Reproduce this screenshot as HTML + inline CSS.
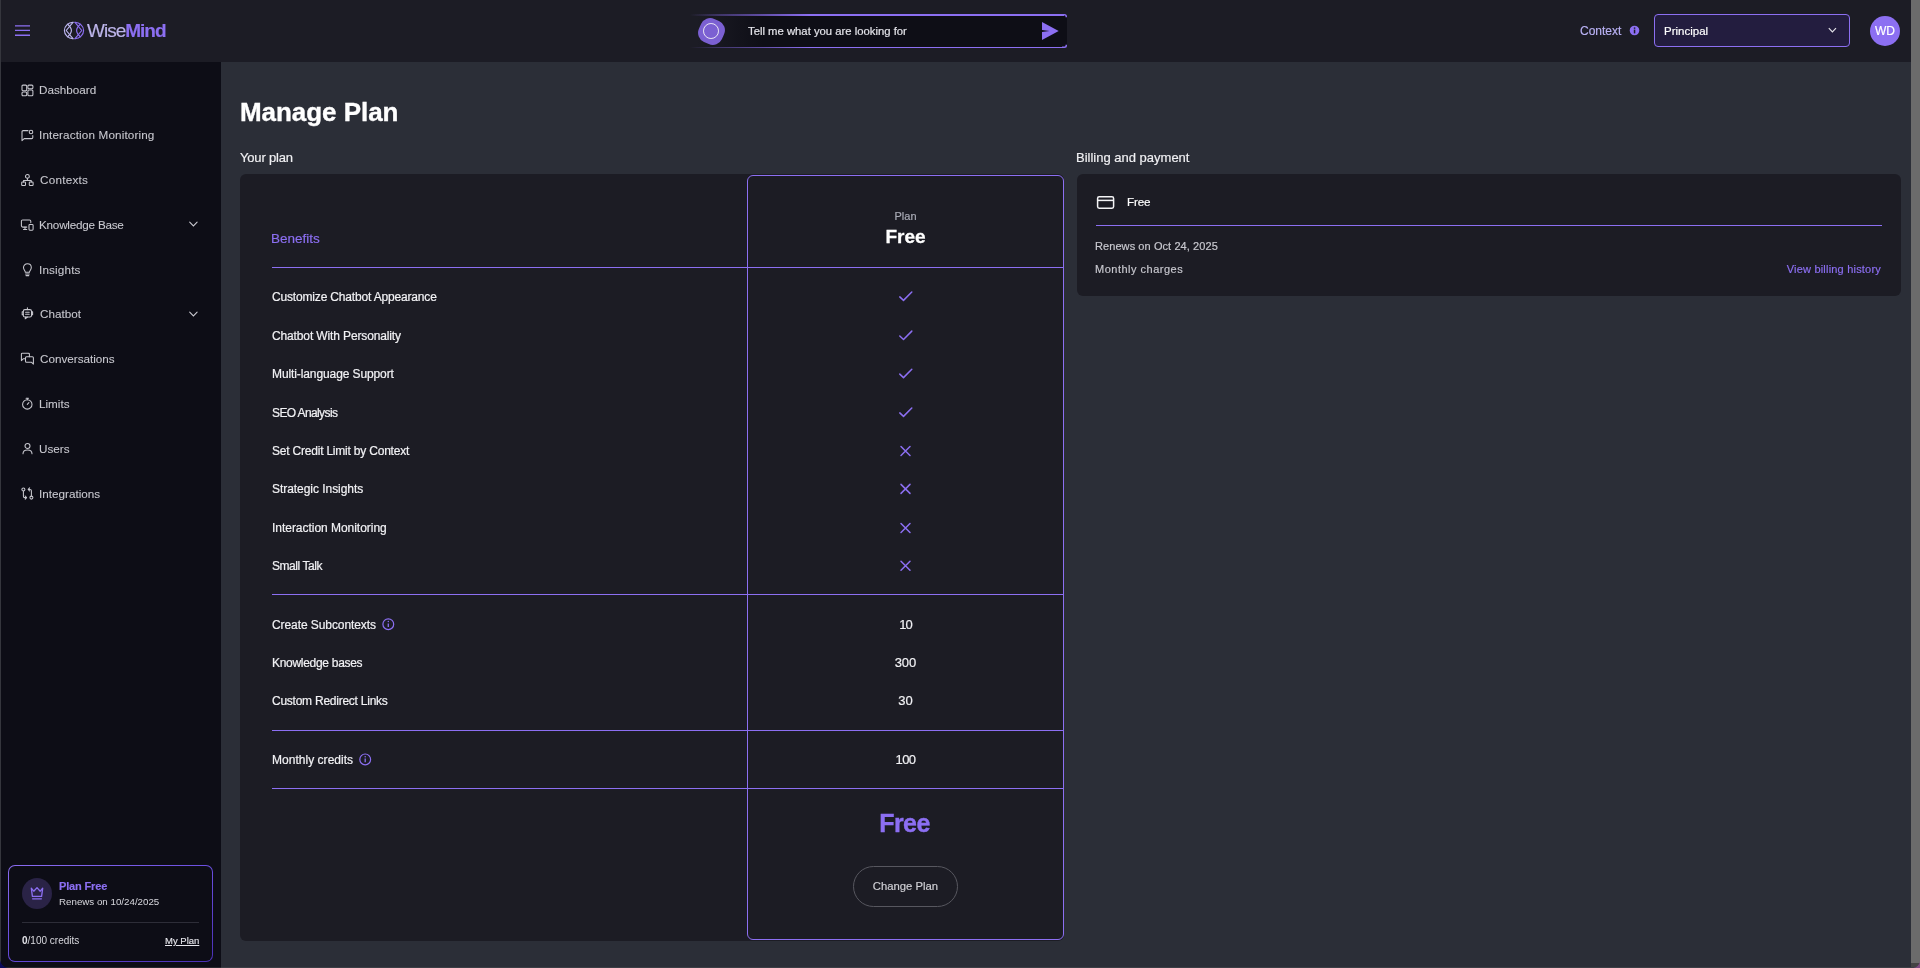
<!DOCTYPE html>
<html><head><meta charset="utf-8"><title>Manage Plan</title>
<style>
*{margin:0;padding:0;box-sizing:border-box}
html,body{width:1920px;height:968px;overflow:hidden;background:#2b2e37;font-family:"Liberation Sans",sans-serif;color:#fff}
.a{position:absolute;display:block}
.t{position:absolute;white-space:nowrap;line-height:1;will-change:transform;-webkit-text-stroke:0.18px currentColor}
</style></head><body>

<div class="a" style="left:0px;top:0px;width:1911px;height:62px;background:#1c1c25"></div>
<div class="a" style="left:0px;top:62px;width:221px;height:906px;background:#0d0d16"></div>
<div class="a" style="left:1911px;top:0px;width:9px;height:968px;background:#6b6b6b"></div>
<div class="a" style="left:0px;top:0px;width:1px;height:968px;background:#35363d"></div>
<div class="a" style="left:0px;top:967px;width:1920px;height:1px;background:#3c3e45"></div>
<div class="a" style="left:0px;top:967px;width:221px;height:1px;background:#26272d"></div>
<div class="a" style="left:1911px;top:963px;width:9px;height:4px;background:#434343"></div>
<svg class="a" style="left:0px;top:958px;" width="10" height="10" viewBox="0 0 10 10" fill="none"><path d="M0 2.5Q1.5 8.5 7.5 10H0Z" fill="#0a0a5a"/></svg>
<svg class="a" style="left:1912px;top:960px;" width="8" height="8" viewBox="0 0 8 8" fill="none"><path d="M8 1.5Q6.8 6.8 1.5 8H8Z" fill="#7d4a80"/></svg>
<svg class="a" style="left:14px;top:24px;" width="17" height="14" viewBox="0 0 17 14" fill="none"><path d="M1 1.9H16M1 6.4H16M1 11.3H16" stroke="#8c6ff2" stroke-width="1.4"/></svg>
<svg class="a" style="left:60px;top:18px;" width="30" height="24" viewBox="0 0 30 24" fill="none"><g stroke="#bdb6f0" stroke-width="1.15" stroke-linejoin="round" stroke-linecap="round"><path d="M13 4.3C8.2 4.6 4.4 8.2 4.4 12.5C4.4 16.8 8.2 20.4 13 20.7"/><path d="M13 4.3L6.2 12.5L13 20.7"/><path d="M7.6 6.2C10.2 8.5 11.4 10.4 11.4 12.5C11.4 14.6 10.2 16.5 7.6 18.8"/></g><g stroke="#8c6ff2" stroke-width="1.15" stroke-linejoin="round" stroke-linecap="round"><path d="M15 4.3C19.8 4.6 23.6 8.2 23.6 12.5C23.6 16.8 19.8 20.4 15 20.7"/><path d="M15 4.3L21.8 12.5L15 20.7"/><path d="M20.4 6.2C17.8 8.5 16.6 10.4 16.6 12.5C16.6 14.6 17.8 16.5 20.4 18.8"/></g></svg>
<div class="t" style="left:87.4px;top:21px;font-size:19px;letter-spacing:-1px;color:#bdb5ea">Wise<span style="color:#8c6ff2;font-weight:bold">Mind</span></div>
<div class="a" style="left:697px;top:14px;width:370px;height:34px;background:linear-gradient(90deg,rgba(14,14,22,0) 0%,#0e0e16 18%,#0e0e16 100%);border-radius:0 3px 3px 0"></div>
<div class="a" style="left:690px;top:14px;width:374px;height:1.5px;background:linear-gradient(90deg,rgba(140,111,242,0) 0%,rgba(140,111,242,0.35) 8%,#8c6ff2 32%)"></div>
<div class="a" style="left:690px;top:46.5px;width:374px;height:1.5px;background:linear-gradient(90deg,rgba(140,111,242,0) 0%,rgba(140,111,242,0.35) 8%,#8c6ff2 32%)"></div>
<svg class="a" style="left:1062px;top:14px;" width="6" height="34" viewBox="0 0 6 34" fill="none"><path d="M0 0.75H2.5Q4.25 0.75 4.25 2.5V3.2M4.25 30.8V31.5Q4.25 33.25 2.5 33.25H0" stroke="#8c6ff2" stroke-width="1.5"/></svg>
<svg class="a" style="left:696px;top:16px;" width="31" height="31" viewBox="0 0 31 31" fill="none"><rect x="2.9" y="2.9" width="25.2" height="25.2" rx="10" transform="rotate(24 15.5 15.5)" fill="#7b60d2"/></svg>
<div class="a" style="left:703.2px;top:23px;width:15.8px;height:15.8px;border:1.7px solid #ebe7f5;border-radius:50%"></div>
<div class="t" style="left:747.5px;top:26px;font-size:11.3px;color:#e4e4ea;">Tell me what you are looking for</div>
<svg class="a" style="left:1040px;top:20px;" width="22" height="22" viewBox="0 0 22 22" fill="none"><path d="M2 2L18.7 11L2 20L2 12L9.5 11L2 10Z" fill="#8c6ff2"/></svg>
<div class="t" style="left:1579.5px;top:25px;font-size:12px;color:#b9b1f4;">Context</div>
<svg class="a" style="left:1629px;top:25px;" width="11" height="11" viewBox="0 0 11 11" fill="none"><circle cx="5.5" cy="5.5" r="4.8" fill="#8c6ff2"/><rect x="4.8" y="4.6" width="1.5" height="3.8" fill="#1c1c25"/><rect x="4.8" y="2.4" width="1.5" height="1.4" fill="#1c1c25"/></svg>
<div class="a" style="left:1654px;top:14px;width:196px;height:33px;border:1.5px solid #8c6ff2;border-radius:4px;background:#231d3f"></div>
<div class="t" style="left:1663.6px;top:26px;font-size:11.5px;color:#fff;">Principal</div>
<svg class="a" style="left:1826px;top:26px;" width="12" height="8" viewBox="0 0 12 8" fill="none"><path d="M2.8 2.2L6.4 5.8L10 2.2" stroke="#e2e2e8" stroke-width="1.2"/></svg>
<div class="a" style="left:1870px;top:16px;width:30px;height:30px;background:#8c6ff2;border-radius:50%"></div>
<div class="t" style="left:1870px;top:25px;font-size:12px;color:#fff;width:30px;text-align:center;">WD</div>
<div class="t" style="left:39.2px;top:84px;font-size:11.7px;color:#c8c8cf;letter-spacing:0px;-webkit-text-stroke:0.08px #c8c8cf;">Dashboard</div>
<div class="t" style="left:39.2px;top:129px;font-size:11.7px;color:#c8c8cf;letter-spacing:0.14px;-webkit-text-stroke:0.08px #c8c8cf;">Interaction Monitoring</div>
<div class="t" style="left:40px;top:174px;font-size:11.7px;color:#c8c8cf;letter-spacing:0.24px;-webkit-text-stroke:0.08px #c8c8cf;">Contexts</div>
<div class="t" style="left:39.2px;top:219px;font-size:11.7px;color:#c8c8cf;letter-spacing:-0.22px;-webkit-text-stroke:0.08px #c8c8cf;">Knowledge Base</div>
<div class="t" style="left:39.2px;top:264px;font-size:11.7px;color:#c8c8cf;letter-spacing:0.16px;-webkit-text-stroke:0.08px #c8c8cf;">Insights</div>
<div class="t" style="left:40px;top:308px;font-size:11.7px;color:#c8c8cf;letter-spacing:0px;-webkit-text-stroke:0.08px #c8c8cf;">Chatbot</div>
<div class="t" style="left:40px;top:353px;font-size:11.7px;color:#c8c8cf;letter-spacing:0px;-webkit-text-stroke:0.08px #c8c8cf;">Conversations</div>
<div class="t" style="left:39.2px;top:398px;font-size:11.7px;color:#c8c8cf;letter-spacing:0px;-webkit-text-stroke:0.08px #c8c8cf;">Limits</div>
<div class="t" style="left:39.2px;top:443px;font-size:11.7px;color:#c8c8cf;letter-spacing:0px;-webkit-text-stroke:0.08px #c8c8cf;">Users</div>
<div class="t" style="left:39.2px;top:488px;font-size:11.7px;color:#c8c8cf;letter-spacing:0px;-webkit-text-stroke:0.08px #c8c8cf;">Integrations</div>
<svg class="a" style="left:20px;top:83px;" width="15" height="15" viewBox="0 0 15 15" fill="none"><g stroke="#c8c8cf" stroke-width="1.05" stroke-linecap="round" stroke-linejoin="round"><rect x="2" y="2.1" width="4.7" height="5.6" rx="1"/><rect x="2" y="8.9" width="4.7" height="3.9" rx="1"/><rect x="7.9" y="2.1" width="5" height="3.6" rx="1"/><rect x="7.9" y="7" width="5" height="5.8" rx="1"/></g></svg>
<svg class="a" style="left:20px;top:128px;" width="15" height="15" viewBox="0 0 15 15" fill="none"><g stroke="#c8c8cf" stroke-width="1.05" stroke-linecap="round" stroke-linejoin="round"><path d="M8 2.6H3.2C2.5 2.6 2 3.1 2 3.8V12.6L4.2 10.6H11.6C12.3 10.6 12.8 10.1 12.8 9.4V7.4"/><circle cx="11" cy="4" r="1.8"/></g></svg>
<svg class="a" style="left:20px;top:172px;" width="15" height="15" viewBox="0 0 15 15" fill="none"><g stroke="#c8c8cf" stroke-width="1.05" stroke-linecap="round" stroke-linejoin="round"><circle cx="7.4" cy="4.4" r="1.9"/><path d="M7.4 6.3V8.5M3.5 10V8.5H11.3V10"/><rect x="1.7" y="10" width="3.8" height="3.5" rx="0.7"/><rect x="9.3" y="10" width="3.8" height="3.5" rx="0.7"/></g></svg>
<svg class="a" style="left:20px;top:217px;" width="15" height="15" viewBox="0 0 15 15" fill="none"><g stroke="#c8c8cf" stroke-width="1.05" stroke-linecap="round" stroke-linejoin="round"><path d="M10.8 5.6V4.2C10.8 3.4 10.3 2.9 9.5 2.9H2.7C1.9 2.9 1.4 3.4 1.4 4.2V8.8C1.4 9.6 1.9 10.1 2.7 10.1H6.8"/><path d="M3.5 12.4H6.8M5 10.1V12.4"/><rect x="9" y="7.4" width="4.1" height="5.8" rx="0.9"/></g></svg>
<svg class="a" style="left:20px;top:262px;" width="15" height="15" viewBox="0 0 15 15" fill="none"><g stroke="#c8c8cf" stroke-width="1.05" stroke-linecap="round" stroke-linejoin="round"><path d="M5.3 10.2C5.3 8.8 3.5 8 3.5 5.6C3.5 3.4 5.2 1.8 7.4 1.8C9.6 1.8 11.3 3.4 11.3 5.6C11.3 8 9.5 8.8 9.5 10.2Z"/><path d="M5.6 12H9.2M6 13.6H8.8"/></g></svg>
<svg class="a" style="left:20px;top:306px;" width="15" height="15" viewBox="0 0 15 15" fill="none"><g stroke="#c8c8cf" stroke-width="1.05" stroke-linecap="round" stroke-linejoin="round"><rect x="3.3" y="3.6" width="8.2" height="7.4" rx="1.6"/><path d="M3.3 5.8H2.2V8.8H3.3M11.5 5.8H12.6V8.8H11.5M7.4 3.6V1.8M5.6 11L5.2 12.8L7.4 11M5.6 6.3H9.2M5.6 8.3H9.2"/></g></svg>
<svg class="a" style="left:20px;top:351px;" width="15" height="15" viewBox="0 0 15 15" fill="none"><g stroke="#c8c8cf" stroke-width="1.05" stroke-linecap="round" stroke-linejoin="round"><path d="M9.4 5.8V3.2C9.4 2.6 9 2.2 8.4 2.2H2.4C1.8 2.2 1.4 2.6 1.4 3.2V9.6L3.2 7.8H5.5"/><path d="M5.5 6.8C5.5 6.2 5.9 5.8 6.5 5.8H12.4C13 5.8 13.4 6.2 13.4 6.8V13.1L11.6 11.3H6.5C5.9 11.3 5.5 10.9 5.5 10.3Z"/></g></svg>
<svg class="a" style="left:20px;top:396px;" width="15" height="15" viewBox="0 0 15 15" fill="none"><g stroke="#c8c8cf" stroke-width="1.05" stroke-linecap="round" stroke-linejoin="round"><circle cx="7.3" cy="8.4" r="4.7"/><path d="M7.3 8.4L8.9 6.6M6.1 2.3H8.5M7.3 2.3V3.7"/></g></svg>
<svg class="a" style="left:20px;top:441px;" width="15" height="15" viewBox="0 0 15 15" fill="none"><g stroke="#c8c8cf" stroke-width="1.05" stroke-linecap="round" stroke-linejoin="round"><circle cx="7.5" cy="4.9" r="2.5"/><path d="M3 12.8C3 10.5 5 8.9 7.5 8.9C10 8.9 12 10.5 12 12.8"/></g></svg>
<svg class="a" style="left:20px;top:486px;" width="15" height="15" viewBox="0 0 15 15" fill="none"><g stroke="#c8c8cf" stroke-width="1.05" stroke-linecap="round" stroke-linejoin="round"><circle cx="3.4" cy="3.4" r="1.5"/><circle cx="11.4" cy="11.6" r="1.5"/><path d="M3.4 4.9V10.2C3.4 11 4 11.6 4.8 11.6H6.5M5.2 10L6.6 11.6L5.2 13.2"/><path d="M11.4 10.1V4.8C11.4 4 10.8 3.4 10 3.4H8.3M9.6 1.8L8.2 3.4L9.6 5"/></g></svg>
<svg class="a" style="left:187px;top:220px;" width="12" height="8" viewBox="0 0 12 8" fill="none"><path d="M2.7 2.2L6.4 5.9L10.1 2.2" stroke="#c8c8cf" stroke-width="1.1" stroke-linecap="round"/></svg>
<svg class="a" style="left:187px;top:310px;" width="12" height="8" viewBox="0 0 12 8" fill="none"><path d="M2.7 2.2L6.4 5.9L10.1 2.2" stroke="#c8c8cf" stroke-width="1.1" stroke-linecap="round"/></svg>
<div class="a" style="left:8px;top:865px;width:205px;height:97px;background:linear-gradient(160deg,#8a6cf0 0%,#6a4ee0 45%,#4a30b4 100%);border-radius:7px"></div>
<div class="a" style="left:9.3px;top:866.3px;width:202.4px;height:94.4px;background:#0d0d16;border-radius:6px"></div>
<div class="a" style="left:22px;top:878px;width:30px;height:31px;background:#2a2346;border-radius:50%"></div>
<svg class="a" style="left:28px;top:884px;" width="18" height="18" viewBox="0 0 18 18" fill="none"><g stroke="#8c6ff2" stroke-width="1.3" stroke-linejoin="round" stroke-linecap="round"><path d="M3.3 4.2L5.8 7.2L9 3.6L12.2 7.2L14.7 4.2L13.6 12.3H4.4Z"/><path d="M4.6 14.8H13.4"/></g></svg>
<div class="t" style="left:58.6px;top:881px;font-size:11px;color:#8c6ff2;font-weight:bold;letter-spacing:-0.15px;">Plan Free</div>
<div class="t" style="left:58.8px;top:897px;font-size:9.75px;color:#d8d8de;-webkit-text-stroke:0px;">Renews on 10/24/2025</div>
<div class="a" style="left:22px;top:922px;width:177px;height:1px;background:#2d2d38"></div>
<div class="t" style="left:22px;top:936px;font-size:10px;color:#d8d8de;-webkit-text-stroke:0px"><b style="color:#e4e4ea">0</b>/100 credits</div>
<div class="t" style="left:164.5px;top:936px;font-size:9.5px;color:#e8e8ee;text-decoration:underline;letter-spacing:0;-webkit-text-stroke:0.1px #e8e8ee">My Plan</div>
<div class="t" style="left:239.6px;top:99px;font-size:26px;color:#fff;font-weight:bold;letter-spacing:-0.05px;-webkit-text-stroke:0.35px #fff;">Manage Plan</div>
<div class="t" style="left:240.3px;top:151px;font-size:13px;color:#f0f0f3;letter-spacing:-0.18px;">Your plan</div>
<div class="t" style="left:1075.6px;top:151px;font-size:13px;color:#f0f0f3;">Billing and payment</div>
<div class="a" style="left:240px;top:174px;width:824px;height:767px;background:#1c1c24;border-radius:6px"></div>
<div class="a" style="left:747px;top:175px;width:317px;height:765px;border:1px solid #8c6ff2;border-radius:6px"></div>
<div class="t" style="left:271.4px;top:232px;font-size:13.5px;color:#8c6ff2;">Benefits</div>
<div class="t" style="left:747px;top:211px;font-size:11px;color:#a9abb6;width:317px;text-align:center;">Plan</div>
<div class="t" style="left:747px;top:227px;font-size:19px;color:#fff;font-weight:bold;width:317px;text-align:center;letter-spacing:0px;-webkit-text-stroke:0.3px #fff;">Free</div>
<div class="a" style="left:272px;top:267px;width:792px;height:1px;background:#8c6ff2"></div>
<div class="a" style="left:272px;top:594px;width:792px;height:1px;background:#8c6ff2"></div>
<div class="a" style="left:272px;top:730px;width:792px;height:1px;background:#8c6ff2"></div>
<div class="a" style="left:272px;top:788px;width:792px;height:1px;background:#8c6ff2"></div>
<div class="t" style="left:272px;top:291px;font-size:12px;color:#f2f2f5;letter-spacing:-0.170px;-webkit-text-stroke:0.2px #f2f2f5;">Customize Chatbot Appearance</div>
<div class="t" style="left:272px;top:330px;font-size:12px;color:#f2f2f5;letter-spacing:-0.130px;-webkit-text-stroke:0.2px #f2f2f5;">Chatbot With Personality</div>
<div class="t" style="left:272px;top:368px;font-size:12px;color:#f2f2f5;letter-spacing:-0.103px;-webkit-text-stroke:0.2px #f2f2f5;">Multi-language Support</div>
<div class="t" style="left:272px;top:407px;font-size:12px;color:#f2f2f5;letter-spacing:-0.615px;-webkit-text-stroke:0.2px #f2f2f5;">SEO Analysis</div>
<div class="t" style="left:272px;top:445px;font-size:12px;color:#f2f2f5;letter-spacing:-0.208px;-webkit-text-stroke:0.2px #f2f2f5;">Set Credit Limit by Context</div>
<div class="t" style="left:272px;top:483px;font-size:12px;color:#f2f2f5;letter-spacing:-0.046px;-webkit-text-stroke:0.2px #f2f2f5;">Strategic Insights</div>
<div class="t" style="left:272px;top:522px;font-size:12px;color:#f2f2f5;letter-spacing:-0.032px;-webkit-text-stroke:0.2px #f2f2f5;">Interaction Monitoring</div>
<div class="t" style="left:272px;top:560px;font-size:12px;color:#f2f2f5;letter-spacing:-0.448px;-webkit-text-stroke:0.2px #f2f2f5;">Small Talk</div>
<div class="t" style="left:272px;top:619px;font-size:12px;color:#f2f2f5;letter-spacing:-0.080px;-webkit-text-stroke:0.2px #f2f2f5;">Create Subcontexts</div>
<div class="t" style="left:272px;top:657px;font-size:12px;color:#f2f2f5;letter-spacing:-0.295px;-webkit-text-stroke:0.2px #f2f2f5;">Knowledge bases</div>
<div class="t" style="left:272px;top:695px;font-size:12px;color:#f2f2f5;letter-spacing:-0.245px;-webkit-text-stroke:0.2px #f2f2f5;">Custom Redirect Links</div>
<div class="t" style="left:272px;top:754px;font-size:12px;color:#f2f2f5;letter-spacing:0.030px;-webkit-text-stroke:0.2px #f2f2f5;">Monthly credits</div>
<svg class="a" style="left:893px;top:289px;" width="24" height="16" viewBox="0 0 24 16" fill="none"><path d="M6.8 7.90L10.5 11.40L18.8 3.00" stroke="#8c6ff2" stroke-width="1.5" stroke-linecap="round" stroke-linejoin="round"/></svg>
<svg class="a" style="left:893px;top:328px;" width="24" height="16" viewBox="0 0 24 16" fill="none"><path d="M6.8 8.00L10.5 11.50L18.8 3.10" stroke="#8c6ff2" stroke-width="1.5" stroke-linecap="round" stroke-linejoin="round"/></svg>
<svg class="a" style="left:893px;top:366px;" width="24" height="16" viewBox="0 0 24 16" fill="none"><path d="M6.8 8.10L10.5 11.60L18.8 3.20" stroke="#8c6ff2" stroke-width="1.5" stroke-linecap="round" stroke-linejoin="round"/></svg>
<svg class="a" style="left:893px;top:405px;" width="24" height="16" viewBox="0 0 24 16" fill="none"><path d="M6.8 7.90L10.5 11.40L18.8 3.00" stroke="#8c6ff2" stroke-width="1.5" stroke-linecap="round" stroke-linejoin="round"/></svg>
<svg class="a" style="left:893px;top:443px;" width="24" height="16" viewBox="0 0 24 16" fill="none"><path d="M8 3.55L17 12.55M17 3.55L8 12.55" stroke="#8c6ff2" stroke-width="1.5" stroke-linecap="round"/></svg>
<svg class="a" style="left:893px;top:481px;" width="24" height="16" viewBox="0 0 24 16" fill="none"><path d="M8 3.40L17 12.40M17 3.40L8 12.40" stroke="#8c6ff2" stroke-width="1.5" stroke-linecap="round"/></svg>
<svg class="a" style="left:893px;top:520px;" width="24" height="16" viewBox="0 0 24 16" fill="none"><path d="M8 3.55L17 12.55M17 3.55L8 12.55" stroke="#8c6ff2" stroke-width="1.5" stroke-linecap="round"/></svg>
<svg class="a" style="left:893px;top:558px;" width="24" height="16" viewBox="0 0 24 16" fill="none"><path d="M8 3.30L17 12.30M17 3.30L8 12.30" stroke="#8c6ff2" stroke-width="1.5" stroke-linecap="round"/></svg>
<svg class="a" style="left:380px;top:616px;" width="16" height="16" viewBox="0 0 16 16" fill="none"><g transform="translate(0.30 0.20)"><circle cx="8" cy="8" r="5.4" stroke="#8c6ff2" stroke-width="1.2"/><path d="M8 7.2V10.8" stroke="#8c6ff2" stroke-width="1.3"/><circle cx="8" cy="5.3" r="0.75" fill="#8c6ff2"/></g></svg>
<svg class="a" style="left:357px;top:751px;" width="16" height="16" viewBox="0 0 16 16" fill="none"><g transform="translate(0.20 0.40)"><circle cx="8" cy="8" r="5.4" stroke="#8c6ff2" stroke-width="1.2"/><path d="M8 7.2V10.8" stroke="#8c6ff2" stroke-width="1.3"/><circle cx="8" cy="5.3" r="0.75" fill="#8c6ff2"/></g></svg>
<div class="t" style="left:747px;top:618px;font-size:13px;color:#f2f2f5;width:317px;text-align:center;letter-spacing:-0.9px;">10</div>
<div class="t" style="left:747px;top:656px;font-size:13px;color:#f2f2f5;width:317px;text-align:center;letter-spacing:0px;">300</div>
<div class="t" style="left:747px;top:694px;font-size:13px;color:#f2f2f5;width:317px;text-align:center;letter-spacing:0px;">30</div>
<div class="t" style="left:747px;top:753px;font-size:13px;color:#f2f2f5;width:317px;text-align:center;letter-spacing:-0.6px;">100</div>
<div class="t" style="left:746.2px;top:811px;font-size:25px;color:#8c6ff2;font-weight:bold;width:317px;text-align:center;letter-spacing:-0.55px;-webkit-text-stroke:0.4px #8c6ff2;">Free</div>
<div class="a" style="left:853px;top:866px;width:105px;height:41px;border:1px solid #57575f;border-radius:21px"></div>
<div class="t" style="left:853px;top:881px;font-size:11.3px;color:#d0d0d5;width:105px;text-align:center;">Change Plan</div>
<div class="a" style="left:1077px;top:174px;width:824px;height:122px;background:#1c1c24;border-radius:6px"></div>
<svg class="a" style="left:1094px;top:193px;" width="22" height="19" viewBox="0 0 22 19" fill="none"><g stroke="#f4f4f6" stroke-width="1.5"><rect x="3.6" y="3.8" width="16" height="11.4" rx="1.6"/><path d="M3.6 7.4H19.6"/></g></svg>
<div class="t" style="left:1127px;top:196px;font-size:11.7px;color:#fff;letter-spacing:-0.2px;">Free</div>
<div class="a" style="left:1096px;top:225px;width:786px;height:1px;background:#8c6ff2"></div>
<div class="t" style="left:1095.2px;top:241px;font-size:11px;color:#c8c8cf;letter-spacing:0.08px;">Renews on Oct 24, 2025</div>
<div class="t" style="left:1095.2px;top:264px;font-size:11px;color:#c8c8cf;letter-spacing:0.5px;">Monthly charges</div>
<div class="t" style="left:1681.3px;top:264px;font-size:11px;color:#8c6ff2;width:200px;text-align:right;letter-spacing:0.2px;">View billing history</div>
</body></html>
